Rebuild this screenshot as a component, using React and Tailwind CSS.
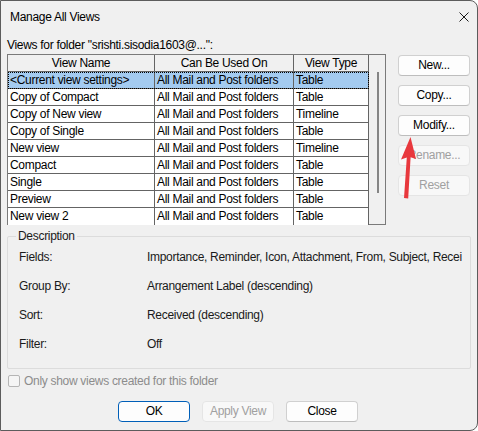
import React from "react";

const views = [
  ["<Current view settings>", "All Mail and Post folders", "Table"],
  ["Copy of Compact", "All Mail and Post folders", "Table"],
  ["Copy of New view", "All Mail and Post folders", "Timeline"],
  ["Copy of Single", "All Mail and Post folders", "Table"],
  ["New view", "All Mail and Post folders", "Timeline"],
  ["Compact", "All Mail and Post folders", "Table"],
  ["Single", "All Mail and Post folders", "Table"],
  ["Preview", "All Mail and Post folders", "Table"],
  ["New view 2", "All Mail and Post folders", "Table"],
];

const details = [
  ["Fields:", "Importance, Reminder, Icon, Attachment, From, Subject, Recei"],
  ["Group By:", "Arrangement Label (descending)"],
  ["Sort:", "Received (descending)"],
  ["Filter:", "Off"],
];

function Button({ children, disabled, primary, className = "" }) {
  return (
    <button
      className={`h-[21px] w-[72px] rounded-[4px] border text-[12px] leading-[19px] text-center ${
        disabled
          ? "bg-[#f8f8f8] border-[#e5e5e5] text-[#a0a0a0]"
          : primary
            ? "bg-[#fdfdfd] border-[#005fb8] text-black"
            : "bg-[#fdfdfd] border-[#d0d0d0] border-b-[#bdbdbd] text-black"
      } ${className}`}
    >
      {children}
    </button>
  );
}

export default function App() {
  return (
    <div
      className="relative w-[478px] h-[431px] bg-[#f0f0f0] border border-[#5c5c5c] rounded-tr-[8px] rounded-br-[8px] overflow-hidden text-black tracking-[-0.3px]"
      style={{ fontFamily: '"Segoe UI", "Liberation Sans", sans-serif' }}
    >
      {/* Title bar */}
      <div className="h-[31px] flex items-center justify-between pl-[9px] pr-[7px]">
        <span className="text-[12px] leading-[16px]">Manage All Views</span>
        <svg width="10" height="10" viewBox="0 0 10 10" className="mr-[1px]">
          <path d="M0.5 0.5 L9.5 9.5 M9.5 0.5 L0.5 9.5" stroke="#1a1a1a" strokeWidth="1" fill="none" />
        </svg>
      </div>

      <div className="pl-[6px]">
        <div className="h-[22px] pt-[5px] text-[12px] leading-[16px]">
          Views for folder "srishti.sisodia1603@...":
        </div>

        <div className="flex gap-[12px]">
          {/* List view */}
          <div className="w-[379px] h-[171px] border border-[#7a7a7a] bg-[#f0f0f0] flex">
            <div className="w-[361px] text-[12px] leading-[16px]">
              <div className="flex h-[17px] border-b border-[#646464] bg-[#f0f0f0]">
                <div className="w-[147px] border-r border-[#646464] text-center">View Name</div>
                <div className="w-[139px] border-r border-[#646464] text-center">Can Be Used On</div>
                <div className="w-[75px] border-r border-[#646464] text-center">View Type</div>
              </div>
              {views.map((v, i) => (
                <div
                  key={v[0]}
                  className={`flex h-[17px] ${i < views.length - 1 ? "border-b border-[#646464]" : ""} ${
                    i === 0 ? "bg-[#a4cbf0] outline outline-1 outline-dotted outline-offset-[-1px] outline-black" : "bg-white"
                  }`}
                >
                  <div className="w-[147px] border-r border-[#646464] pl-[2px] whitespace-nowrap overflow-hidden">{v[0]}</div>
                  <div className="w-[139px] border-r border-[#646464] pl-[2px] whitespace-nowrap overflow-hidden">{v[1]}</div>
                  <div className="w-[75px] border-r border-[#646464] pl-[2px] whitespace-nowrap overflow-hidden">{v[2]}</div>
                </div>
              ))}
            </div>
            <div className="w-[16px]">
              <div className="ml-[8px] mt-[17px] w-[2px] h-[121px] bg-[#858585]" />
            </div>
          </div>

          {/* Side buttons */}
          <div className="mt-[1px] flex flex-col gap-[9px]">
            <Button>New...</Button>
            <Button>Copy...</Button>
            <Button>Modify...</Button>
            <Button disabled>Rename...</Button>
            <Button disabled>Reset</Button>
          </div>
        </div>

        {/* Description group */}
        <div className="relative mt-[11px] w-[464px] h-[133px] border border-[#dcdcdc] rounded-[2px]">
          <span className="absolute -top-[9px] left-[8px] px-[2px] bg-[#f0f0f0] text-[12px] leading-[16px] text-[#1a1a1a]">
            Description
          </span>
          <div className="pt-[12px] pl-[11px] pr-[6px] flex flex-col gap-[13px] text-[12px] leading-[16px] text-[#1a1a1a]">
            {details.map(([k, val]) => (
              <div key={k} className="flex h-[16px]">
                <div className="w-[128px] shrink-0">{k}</div>
                <div className="whitespace-nowrap">{val}</div>
              </div>
            ))}
          </div>
        </div>

        {/* Checkbox */}
        <div className="mt-[5px] ml-[1px] h-[14px] flex items-center">
          <div className="w-[12px] h-[12px] rounded-[2px] border border-[#b5b5b5] bg-[#f5f5f5]" />
          <span className="ml-[4px] text-[12px] leading-[16px] text-[#8c8c8c]">Only show views created for this folder</span>
        </div>

        {/* Bottom buttons */}
        <div className="mt-[13px] ml-[111px] flex gap-[12px]">
          <Button primary>OK</Button>
          <Button disabled>Apply View</Button>
          <Button>Close</Button>
        </div>
      </div>

      {/* Annotation arrow */}
      <svg className="absolute left-0 top-0 pointer-events-none" width="478" height="431" viewBox="0 0 478 431">
        <polygon
          points="409.5,136 400,158.5 405.8,156.5 403,197 407.2,197.5 409.6,156.2 415,158"
          fill="#e8383d"
        />
      </svg>
    </div>
  );
}
